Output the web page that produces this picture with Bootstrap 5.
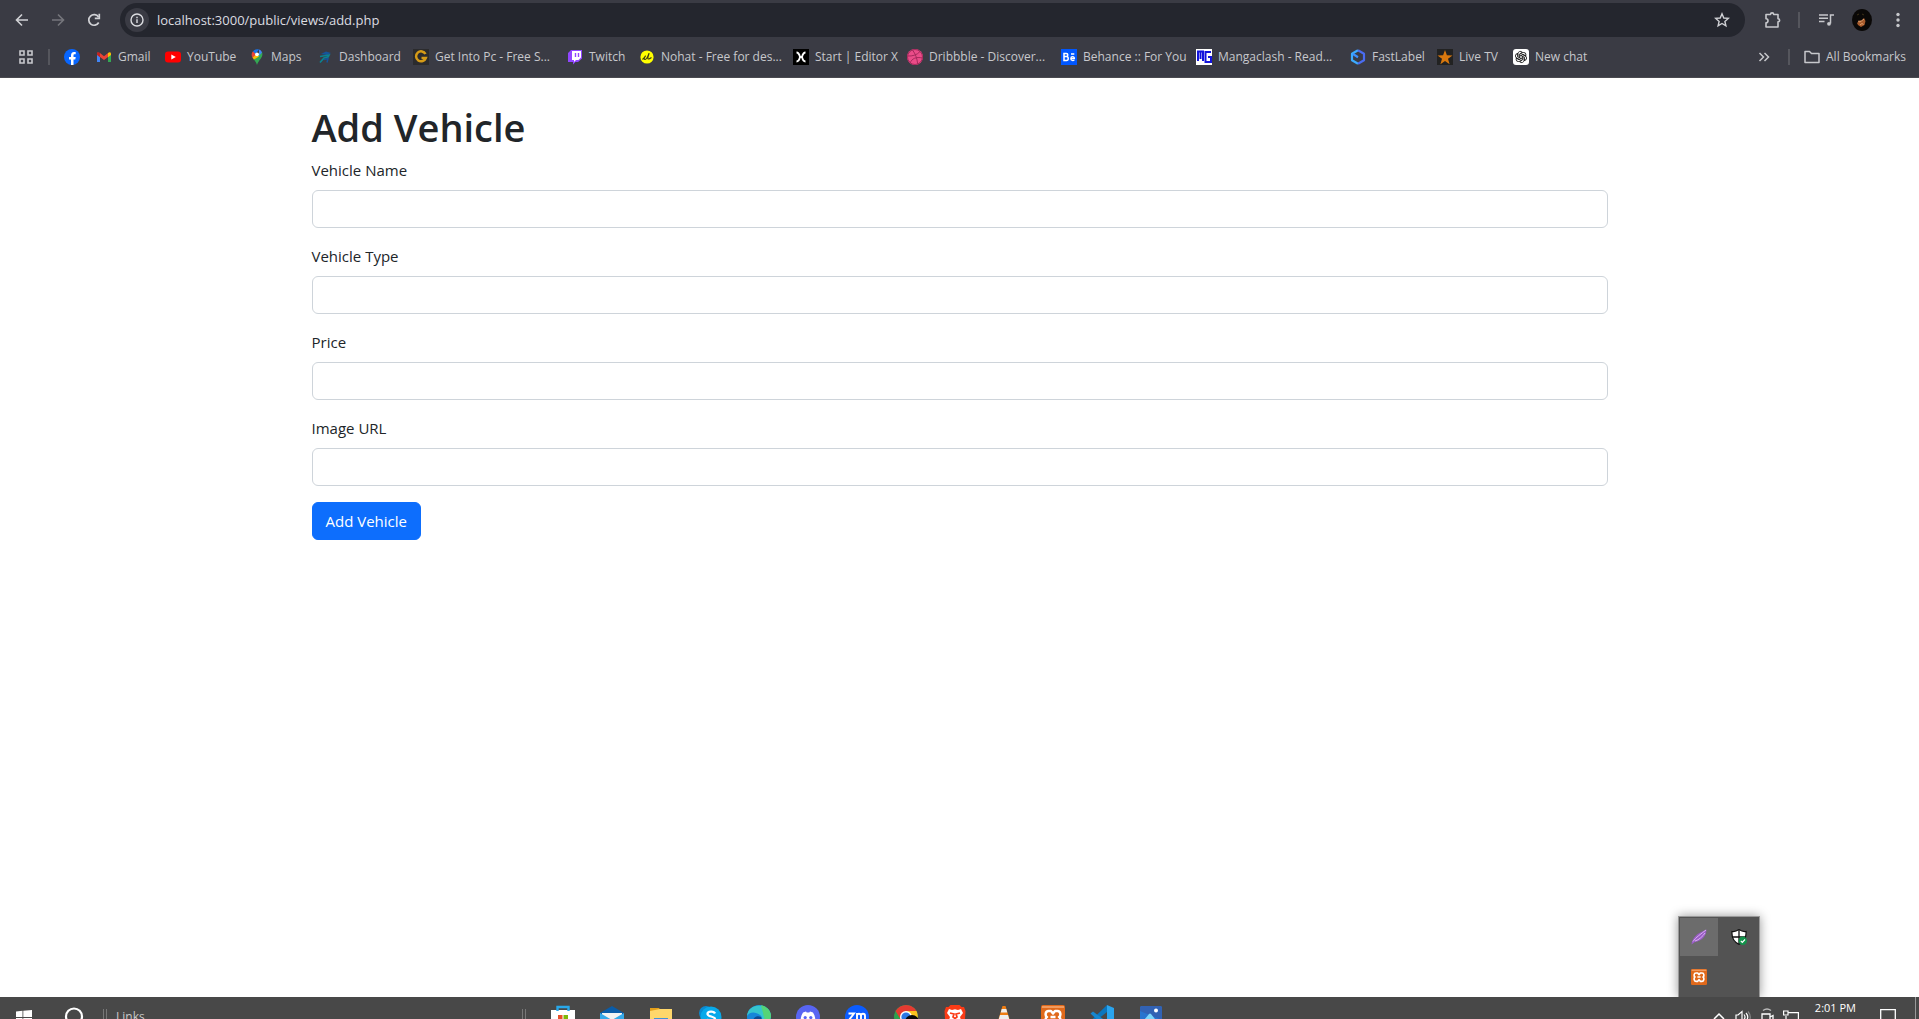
<!DOCTYPE html>
<html lang="en">
<head>
<meta charset="utf-8">
<meta name="viewport" content="width=device-width, initial-scale=1">
<title>Add Vehicle</title>
<link href="https://cdn.jsdelivr.net/npm/bootstrap@5.3.0/dist/css/bootstrap.min.css" rel="stylesheet">
<style>
  :root { --ui-font: "Open Sans", "Noto Sans", sans-serif; --bs-body-font-size: 15px; }
  body { font-family: var(--ui-font); }
  svg { display: block; flex: none; }
  .desktop { height: 100vh; overflow: hidden; }

  /* browser chrome */
  .chrome-top { background: #3a3b44; color: #c7c8cc; border-bottom: 1px solid #4a4a50; }
  .tool-row { padding: 3px 11px 0 12px; }
  .bare-btn { background: none; border: 0; padding: 0; color: inherit; width: 20px; height: 20px; display: flex; align-items: center; justify-content: center; }
  .nav-set { gap: 16px; }
  .omnibox { background: #24262e; border-radius: 17px; height: 34px; padding: 0 13px 0 5px; margin-left: 16px; gap: 8px; }
  .info-dot { width: 24px; height: 24px; border-radius: 50%; background: #3a3b44; }
  .omnibox input { background: none; border: 0; outline: 0; padding: 0; color: #dcdde1; font-size: 13px; line-height: 20px; }
  .right-set { gap: 16px; margin-left: 17px; }
  .divider { width: 2px; height: 16px; background: #55565d; }
  .mark-row { height: 40px; padding: 0 13px 0 16px; font-size: 12px; line-height: 16px; }
  .mark-row a { color: #c7c8cc; text-decoration: none; display: flex; align-items: center; gap: 6px; white-space: nowrap; }
  .mark-start { gap: 12px; }
  .mark-end { gap: 14px; }
  .mark-grid { display: grid; margin-left: 14px; align-items: center;
    grid-template-columns: 32px 69px 84px 68px 96px 154px 72px 154px 114px 154px 135px 154px 87px 76px 80px; }

  /* page */
  .page h1 { font-size: 38px; line-height: 50px; margin-bottom: 6px; font-weight: 600; }
  .page label { line-height: 24px; }
  .page .form-control { height: 38px; font-size: 15px; border-color: #ced4da; }
  .page .btn { height: 38px; font-size: 15px; padding: 0 13px; }

  /* taskbar */
  .taskbar { height: 22px; overflow: hidden; background: #484848; color: #fff; }
  .task-strip { height: 40px; padding: 0 3px 0 16px; font-size: 12px; }
  .start-set { gap: 32px; width: 87px; }
  .bar-grip { width: 4px; height: 16px; border: solid #777; border-width: 0 1px; }
  .links-zone { width: 415px; padding-left: 9px; color: #c9c9c9; }
  .apps-set { gap: 25px; margin-left: 25px; }
  .tray-set { gap: 8px; }
  .tray-clock { margin: 0 24px 18px 8px; line-height: 16px; font-size: 11px; }
  .show-desk { width: 1px; height: 40px; background: #999; margin-left: 19px; }
  .tray-pop { position: absolute; right: 159px; bottom: 22px; width: 82px; height: 81px; background: #535353; border: 1px solid #999; border-bottom: 0; padding: 1px; box-shadow: 0 0 10px rgba(0,0,0,.4); display: grid; grid-template-columns: 38px 38px; grid-template-rows: 38px 38px; gap: 2px; clip-path: inset(-20px -20px 0 -20px); }
  .tray-pop button { border: 0; background: none; padding: 0; display: flex; align-items: center; justify-content: center; }
  .tray-pop .lit { background: #6c6c6c; }
</style>
<script src="https://cdn.jsdelivr.net/npm/bootstrap@5.3.0/dist/js/bootstrap.bundle.min.js"></script>
</head>
<body>
<svg width="0" height="0" class="position-absolute" aria-hidden="true">
  <symbol id="xampp" viewBox="0 0 24 24"><rect width="24" height="24" rx="2" fill="#e0691b"/><rect x="1" y="1" width="22" height="2" fill="#f09a5e"/><path d="M12 8.500 10 6H7.500C4 6 4 11 6 12c-2 1-2 6.500 1.500 6.500H10l2-2.500 2 2.500h2.500C20 18.500 20 13 18 12c2-1 2-6-1.500-6H14zM9.500 12h5" fill="none" stroke="#fff" stroke-width="2.500" stroke-linejoin="round"/></symbol>
</svg>
<div class="desktop d-flex flex-column position-relative">

  <header class="chrome-top">
    <div class="tool-row d-flex align-items-center">
      <div class="nav-set d-flex">
        <button class="bare-btn" aria-label="Back"><svg width="14" height="14" viewBox="0 0 14 14" fill="none" stroke="#d0d1d5" stroke-width="1.600"><path d="M13 7H2M7 1.500 1.500 7 7 12.500"/></svg></button>
        <button class="bare-btn" aria-label="Forward"><svg width="14" height="14" viewBox="0 0 14 14" fill="none" stroke="#75767c" stroke-width="1.600"><path d="M1 7h11M7 1.500 12.500 7 7 12.500"/></svg></button>
        <button class="bare-btn" aria-label="Reload"><svg width="14" height="14" viewBox="0 0 14 14" fill="none" stroke="#d0d1d5" stroke-width="1.700"><path d="M11.700 9.500A5.300 5.300 0 1 1 11.500 4"/><path d="M12.300.8v4.500H7.800"/></svg></button>
      </div>
      <div class="omnibox d-flex align-items-center flex-grow-1">
        <span class="info-dot d-flex align-items-center justify-content-center"><svg width="14" height="14" viewBox="0 0 14 14" fill="none" stroke="#dcdde1" stroke-width="1.400"><circle cx="7" cy="7" r="6"/><path d="M7 6.200V10M7 3.800v1.400"/></svg></span>
        <input class="flex-grow-1" type="text" value="localhost:3000/public/views/add.php" aria-label="Address">
        <button class="bare-btn" aria-label="Bookmark this tab"><svg width="16" height="16" viewBox="0 0 16 16" fill="none" stroke="#d0d1d5" stroke-width="1.400"><path d="m8 1.800 1.800 4.200 4.500.4-3.400 3 1 4.400L8 11.500l-3.900 2.300 1-4.400-3.400-3 4.500-.4z"/></svg></button>
      </div>
      <div class="right-set d-flex align-items-center">
        <button class="bare-btn" aria-label="Extensions"><svg width="18" height="18" viewBox="0 0 18 18" fill="none" stroke="#c7c8cc" stroke-width="1.600"><path d="M3 3.500h4.500a1.600 1.600 0 0 1 3.200 0h4.300v4.200a1.600 1.600 0 0 1 0 3.200V16H3v-4.200a2 2 0 0 0 0-4z" stroke-linejoin="round"/></svg></button>
        <span class="divider"></span>
        <button class="bare-btn" aria-label="Media controls"><svg width="16" height="14" viewBox="0 0 16 14" fill="none" stroke="#c7c8cc" stroke-width="1.500"><path d="M1 2h9M1 5.200h9M1 8.400h5.500M12.500 10.500V2H16"/><circle cx="11" cy="10.800" r="1.900" fill="#c7c8cc" stroke="none"/></svg></button>
        <button class="bare-btn" aria-label="Profile"><svg width="20" height="22" viewBox="0 0 20 22"><ellipse cx="10" cy="11" rx="10" ry="11" fill="#0a0807"/><path d="m5 14 3-3 1.500 1L12 9l1.500 3-1 4-3.500 2-3-2z" fill="#a85b2c"/><path d="m6 12 2 1 4-3M8 16l2-1.500 1.500 1" stroke="#e2a06c" fill="none"/><path d="m5 6 2-1M10 5l2 1" stroke="#3c3018"/></svg></button>
        <button class="bare-btn" aria-label="Menu"><svg width="4" height="16" fill="#c7c8cc"><circle cx="2" cy="2.500" r="1.700"/><circle cx="2" cy="8" r="1.700"/><circle cx="2" cy="13.500" r="1.700"/></svg></button>
      </div>
    </div>

    <nav class="mark-row d-flex align-items-center" aria-label="Bookmarks">
      <div class="mark-start d-flex align-items-center">
        <button class="bare-btn" aria-label="Apps"><svg width="14" height="14" fill="none" stroke="#c7c8cc" stroke-width="1.600"><path d="M1 1h4v4H1zM9 1h4v4H9zM1 9h4v4H1zM9 9h4v4H9z"/></svg></button>
        <span class="divider"></span>
      </div>
      <div class="mark-grid">
        <a href="#" aria-label="Facebook"><svg width="16" height="16" viewBox="0 0 16 16"><circle cx="8" cy="8" r="8" fill="#0866ff"/><path d="M7 16v-5.500H5V8h2V6.500C7 4.200 8 3 10 3h1.700v2.300h-1C9.700 5.300 9.500 5.700 9.500 6.500V8h2.200l-.4 2.500H9.500V16z" fill="#fff"/></svg></a>
        <a href="#"><svg width="16" height="16" viewBox="0 0 16 16"><path d="M1 4v9h3V7z" fill="#4285f4"/><path d="M12 7v6h3V4z" fill="#34a853"/><path d="M1 3.500 4 4l4 3.200L12 4v4l-4 3-4-3z" fill="#ea4335"/><path d="M12 4c1.500-1.200 3-.8 3 1v1l-3 2.200z" fill="#fbbc04"/><path d="M4 4C2.500 2.800 1 3.200 1 5v1l3 2.200z" fill="#c5221f"/></svg>Gmail</a>
        <a href="#"><svg width="16" height="16" viewBox="0 0 16 16"><rect y="2.500" width="16" height="11" rx="3" fill="#f00"/><path d="m6.300 5.500 4.500 2.500-4.500 2.500z" fill="#fff"/></svg>YouTube</a>
        <a href="#"><svg width="16" height="16" viewBox="0 0 16 16"><path d="M8 16c-.8-3-2-4-3.500-6L10 4l3-1c1 3 0 5-1.500 7S9 13 8 16z" fill="#34a853"/><path d="M3.400 8.300 7 4.500l3 3-5.200 3z" fill="#fbbc04"/><path d="M4 2.200 7.500 5l-4 3.500C2 6 2.700 3.700 4 2.200z" fill="#ea4335"/><path d="M4 2.200C6 0 8.500 0 10 .6L6.500 5z" fill="#1a73e8"/><path d="M10 .6c1.500.5 2.500 1.500 3 2.800L10 7z" fill="#4285f4"/><circle cx="8" cy="5.300" r="1.900" fill="#fff"/></svg>Maps</a>
        <a href="#"><svg width="16" height="16" viewBox="0 0 16 16" fill="none"><path d="m4 5 5-2.500 5 1.500-4 2z" fill="#15549b"/><path d="M3 7.500 12 6l-1 2-4 1-4 4.500" stroke="#0c8291" stroke-width="1.700"/><path d="m7 10.500 4-1-1 4" stroke="#15549b" stroke-width="1.500"/></svg>Dashboard</a>
        <a href="#"><svg width="16" height="16" viewBox="0 0 16 16"><rect width="16" height="16" fill="#2b2b2d"/><path d="M12.500 5A5 5 0 1 0 12.800 9H8.500" fill="none" stroke="#d69b17" stroke-width="2.500"/></svg>Get Into Pc - Free S...</a>
        <a href="#"><svg width="16" height="16" viewBox="0 0 16 16"><path d="M4 1h11v8.500L11 13H8.500L6 15.500V13H1V4z" fill="#9146ff"/><path d="M5 2h9v6.500L11.500 11H9l-2 2v-2H5z" fill="#fff"/><path d="M8.500 4v4M11.500 4v4" stroke="#9146ff" stroke-width="1.400"/></svg>Twitch</a>
        <a href="#"><svg width="16" height="16" viewBox="0 0 16 16"><circle cx="8" cy="8" r="6.600" fill="#ff0"/><path d="M3.500 10.500c1-1 3-3 3-3.500s-2.500 3.500-.5 3.500S9.500 5 10 4.500 7.500 10.500 9.500 10s2-1 3-1.500" fill="none" stroke="#3c3c12" stroke-width="1.100"/></svg>Nohat - Free for des...</a>
        <a href="#"><svg width="16" height="16" viewBox="0 0 16 16"><rect width="16" height="16" fill="#000"/><path d="M3.500 3.500C6 3.500 6.500 6 7 8c-.5 2-1 4.500-3.500 4.500M12.500 3.500C10 3.500 9.500 6 9 8c.5 2 1 4.500 3.500 4.500M7 8h2" fill="none" stroke="#fff" stroke-width="1.800"/></svg>Start | Editor X</a>
        <a href="#"><svg width="16" height="16" viewBox="0 0 16 16"><circle cx="8" cy="8" r="8" fill="#ea4c89"/><g fill="none" stroke="#a52a5c"><path d="M5.500 1C8.500 5 10 9 10.700 15M.5 7c5 .3 9.500-1 12.500-4.500M3 14c2-4.500 6-6.500 12.500-5"/><circle cx="8" cy="8" r="7.500"/></g></svg>Dribbble - Discover...</a>
        <a href="#"><svg width="16" height="16" viewBox="0 0 16 16"><rect width="16" height="16" fill="#0057ff"/><path d="M3 4.500h2.300c2 0 2 3 0 3H3zm0 3h2.500c2.300 0 2.300 4 0 4H3z" fill="none" stroke="#fff" stroke-width="1.500"/><path d="M13.300 10.800c-1 1.200-3.500 1-3.500-1.300s3.600-2.500 3.600.2H10M10 5h3.300" fill="none" stroke="#fff" stroke-width="1.300"/></svg>Behance :: For You</a>
        <a href="#"><svg width="16" height="16" viewBox="0 0 16 16"><rect width="16" height="16" fill="#fff"/><path d="M2 12V2.500h5V12M4.500 2v8M15 3H9.500v10H15V8h-3" fill="none" stroke="#1414dc" stroke-width="2"/></svg>Mangaclash - Read...</a>
        <a href="#"><svg width="16" height="16" viewBox="0 0 16 16" fill="none" stroke-width="2.200" stroke-linejoin="round"><path d="M8 1.300 2 4.700v6.600l6 3.400" stroke="#3cabff"/><path d="m8 14.700 6-3.400V4.700L8 1.300" stroke="#4a6cf0"/><path d="m3 5 5 3.200" stroke="#3c8fff"/></svg>FastLabel</a>
        <a href="#"><svg width="16" height="16" viewBox="0 0 16 16"><rect width="16" height="16" fill="#222"/><path d="m8 1 1.900 5.200 5.600.2L11 9.800l1.600 5.400L8 12l-4.600 3.200L5 9.800.5 6.400l5.600-.2z" fill="#d9780e"/></svg>Live TV</a>
        <a href="#"><svg width="16" height="16" viewBox="0 0 16 16"><rect width="16" height="16" rx="3" fill="#fff"/><g fill="none" stroke="#222" stroke-width=".9"><g id="petal"><path d="M5 7.500V4.600a2.400 2.400 0 0 1 4.300-1.300L6.600 5v4"/></g><use href="#petal" transform="rotate(60 8 8)"/><use href="#petal" transform="rotate(120 8 8)"/><use href="#petal" transform="rotate(180 8 8)"/><use href="#petal" transform="rotate(240 8 8)"/><use href="#petal" transform="rotate(300 8 8)"/></g></svg>New chat</a>
      </div>
      <div class="mark-end d-flex align-items-center ms-auto">
        <button class="bare-btn" aria-label="More bookmarks"><svg width="12" height="10" fill="none" stroke="#c7c8cc" stroke-width="1.500"><path d="m1.500 1 4 4-4 4M6.500 1l4 4-4 4"/></svg></button>
        <span class="divider"></span>
        <a href="#"><svg width="16" height="16" viewBox="0 0 16 16" fill="none" stroke="#c7c8cc" stroke-width="1.500"><path d="M1 2.500h4.500l2 2H15v9H1z" stroke-linejoin="round"/></svg>All Bookmarks</a>
      </div>
    </nav>
  </header>

  <main class="page flex-grow-1 bg-white">
    <div class="container mt-4">
      <h1>Add Vehicle</h1>
      <form>
        <div class="mb-3"><label for="vName" class="form-label">Vehicle Name</label><input type="text" class="form-control" id="vName"></div>
        <div class="mb-3"><label for="vType" class="form-label">Vehicle Type</label><input type="text" class="form-control" id="vType"></div>
        <div class="mb-3"><label for="vPrice" class="form-label">Price</label><input type="text" class="form-control" id="vPrice"></div>
        <div class="mb-3"><label for="vImage" class="form-label">Image URL</label><input type="text" class="form-control" id="vImage"></div>
        <button type="submit" class="btn btn-primary">Add Vehicle</button>
      </form>
    </div>
  </main>

  <footer class="taskbar">
    <div class="task-strip d-flex align-items-center">
      <div class="start-set d-flex align-items-center">
        <button class="bare-btn w-auto" aria-label="Start"><svg width="16" height="14" viewBox="0 0 16 14" fill="#fff"><path d="M0 1.500 6.500.8V7H0zM7.300.7 16 0v7H7.300zM0 8h6.500v5.500L0 12.800zM7.300 8H16v6.500l-8.700-1z"/></svg></button>
        <button class="bare-btn" aria-label="Search"><svg width="20" height="20" fill="none" stroke="#fff" stroke-width="2.200"><circle cx="10" cy="9.500" r="8"/></svg></button>
      </div>
      <span class="bar-grip"></span>
      <span class="links-zone">Links</span>
      <span class="bar-grip"></span>
      <div class="apps-set d-flex align-items-center">
        <button class="bare-btn w-auto" aria-label="Store"><svg width="24" height="24"><path d="M0 5h24v17H0z" fill="#fff"/><path d="M6.500 6V2h11v4" fill="none" stroke="#28a8ea" stroke-width="2.400"/><path d="M7 10h4.500v4.500H7z" fill="#e8502b"/><path d="M12.500 10H17v4.500h-4.500z" fill="#7eb90a"/></svg></button>
        <button class="bare-btn w-auto" aria-label="Mail"><svg width="24" height="24"><path d="M0 8 12 1l12 7v4H0z" fill="#0a5ca8"/><path d="M2 8h20v8H2z" fill="#f3f3f3"/><path d="m0 8 12 7 12-7v14H0z" fill="#35a8e8"/></svg></button>
        <button class="bare-btn w-auto" aria-label="File Explorer"><svg width="24" height="24"><path d="M1 3h9l2 3h-11z" fill="#e5a019"/><path d="M1 6l10-2h12v18H1z" fill="#ffd76b"/><path d="M5 13h14v8H5z" fill="#4392d6"/></svg></button>
        <button class="bare-btn w-auto" aria-label="Skype"><svg width="24" height="24"><circle cx="8" cy="8" r="7" fill="#0a8ad1"/><circle cx="13" cy="12" r="10.500" fill="#08a9ea"/><path d="M17 8.500c-1-2.500-7.500-2.500-7.500.5s7.500 2 7.500 5-7 3-8 0" fill="none" stroke="#fff" stroke-width="2.300"/></svg></button>
        <button class="bare-btn w-auto" aria-label="Edge"><svg width="24" height="24"><circle cx="12" cy="12" r="12" fill="#1686d9"/><path d="M0 11C1-3 23-3 24 11c0 4-3 5-6 5-5 0-1-3-5-6S3 6 0 11z" fill="#35c5ce"/><path d="M14 .2C20 1 24 6 24 11c0 4-3 5-6 5z" fill="#54d477"/><path d="M7 24c-4-7 0-15 7-12l1 3-2 9z" fill="#0d4a91"/></svg></button>
        <button class="bare-btn w-auto" aria-label="Discord"><svg width="24" height="24"><circle cx="12" cy="12" r="12" fill="#5865f2"/><path d="M7 7.500 10 6.500l.7 1h2.600l.7-1 3 1c2 3 2.500 6 2.200 9L16 18H8l-3.200-1.500c-.3-3 .2-6 2.200-9z" fill="#fff"/><circle cx="9.200" cy="12.500" r="1.600" fill="#5865f2"/><circle cx="14.800" cy="12.500" r="1.600" fill="#5865f2"/></svg></button>
        <button class="bare-btn w-auto" aria-label="Zoom"><svg width="24" height="24"><circle cx="12" cy="12" r="12" fill="#0b5cff"/><path d="M3.500 8.500h5.500l-5 6.500h5.500M12 15.500V8m0 3c0-3 4-3 4 0v4.500m0-4.500c0-3 4-3 4 0v4.500" fill="none" stroke="#fff" stroke-width="1.900"/></svg></button>
        <button class="bare-btn w-auto" aria-label="Chrome"><svg width="24" height="24"><circle cx="12" cy="12" r="12" fill="#2ba24c"/><path d="M12 0c5 0 9 3 10.500 6H12L7 15 1.500 6C4 2 8 0 12 0z" fill="#e53a31"/><path d="M12 6h10.500c3 6 1 18-10.500 18l6-12z" fill="#fcc31e"/><circle cx="12" cy="12" r="6" fill="#fff"/><circle cx="12" cy="12" r="4.600" fill="#2b78e4"/><ellipse cx="18" cy="17" rx="7" ry="7" fill="#080808"/></svg></button>
        <button class="bare-btn w-auto" aria-label="Brave"><svg width="24" height="24"><path d="M7.500 0h9l2 2h2.500l1.500 4-.5 8-4 6-6 4-6-4-4-6-.5-8L3 2h2.500z" fill="#fb3b16"/><path d="m6 4 3 1 3-.8L15 5l3-1 2 4-3 4 1 3-6 5-6-5 1-3-3-4z" fill="#fff"/><path d="m7 8 4 1-1 3 2 1.500 2-1.500-1-3 4-1M10 17l2-1.500 2 1.500" fill="none" stroke="#fb3b16" stroke-width="1.700"/></svg></button>
        <button class="bare-btn w-auto" aria-label="VLC"><svg width="24" height="24"><path d="M10.500 1h3L19 19H5z" fill="#ef7d12"/><path d="m9.700 4-1 3.500h6.600l-1-3.500zM8 10l-1.200 4h10.400L16 10z" fill="#eee"/><path d="M4 17h16l2 5H2z" fill="#ef7d12"/></svg></button>
        <button class="bare-btn w-auto" aria-label="XAMPP"><svg width="24" height="24"><use href="#xampp"/></svg></button>
        <button class="bare-btn w-auto" aria-label="VS Code"><svg width="24" height="24"><path d="M17 0 24 3v18l-7 3z" fill="#2aa4ee"/><path d="M17 0v7L3 18l-2.500-2z" fill="#0a76bf"/><path d="m.5 8.500 2.500-2L17 17v7z" fill="#1687cf"/></svg></button>
        <button class="bare-btn w-auto" aria-label="Photos"><svg width="24" height="24"><rect x="1" y="1" width="22" height="22" rx="2" fill="#2874cf"/><path d="M1 6V3q0-2 2-2h18q2 0 2 2v12z" fill="#3262b4"/><circle cx="17" cy="5.500" r="2" fill="#fff"/><path d="m1 20 9-11q1-1 2 0l11 14H3z" fill="#7cd5fa"/></svg></button>
      </div>
      <div class="tray-set d-flex align-items-center ms-auto">
        <svg width="16" height="16" fill="none" stroke="#fff" stroke-width="1.500"><path d="m3 10 5-5 5 5"/></svg>
        <svg width="16" height="16" fill="none" stroke="#fff" stroke-width="1.200"><path d="M1 6h2l4-3.500v11L3 10.500H1zM9 5.500q2 2.500 0 5M11 4q3.500 4 0 8"/><path d="M13 2.500q4.500 5.500 0 11" stroke="#888"/></svg>
        <svg width="16" height="20" fill="none" stroke="#fff" stroke-width="1.300"><path d="M4 3.500q4-3 8 0" stroke="#bbb"/><path d="M3 7h8v10H3zM11 10l3-1.500v7L11 14"/></svg>
        <svg width="16" height="16" fill="none" stroke="#fff" stroke-width="1.200"><path d="M5 3.600h10.400V14H3V7M.6 2h4.400v4H.6z"/></svg>
        <span class="tray-clock">2:01 PM</span>
      </div>
      <button class="bare-btn w-auto" aria-label="Notifications"><svg width="16" height="16" fill="none" stroke="#fff" stroke-width="1.300"><path d="M.7.7h14.600v12H9l-2 2.500v-2.500H.7z"/></svg></button>
      <span class="show-desk"></span>
    </div>
  </footer>

  <div class="tray-pop">
    <button class="lit" aria-label="Feather"><svg width="16" height="16"><path d="M.5 15.500C1 9 6 4 15.500.5 15.500 7 11 12 4 13z" fill="#9a5cc6"/><path d="M2 12.500C5 8 10 5 15 1M4 12C8 11 12 7 14 4" fill="none" stroke="#d9b2f0"/></svg></button>
    <button aria-label="Security"><svg width="16" height="16"><path d="M8 .6Q4.500 3 1 2.500C.5 9 3 13 8 15.400 13 13 15.500 9 15 2.500 11.500 3 8 .6 8 .6z" fill="#fff" stroke="#111" stroke-width="1.200"/><path d="M8 1v14M1 8h14" stroke="#111" stroke-width="1.300"/><circle cx="11.800" cy="11.800" r="4.200" fill="#12924a"/><path d="m9.800 11.800 1.500 1.500 2.700-2.800" fill="none" stroke="#fff" stroke-width="1.200"/></svg></button>
    <button aria-label="XAMPP control"><svg width="16" height="16"><use href="#xampp"/></svg></button>
  </div>
</div>
</body>
</html>
